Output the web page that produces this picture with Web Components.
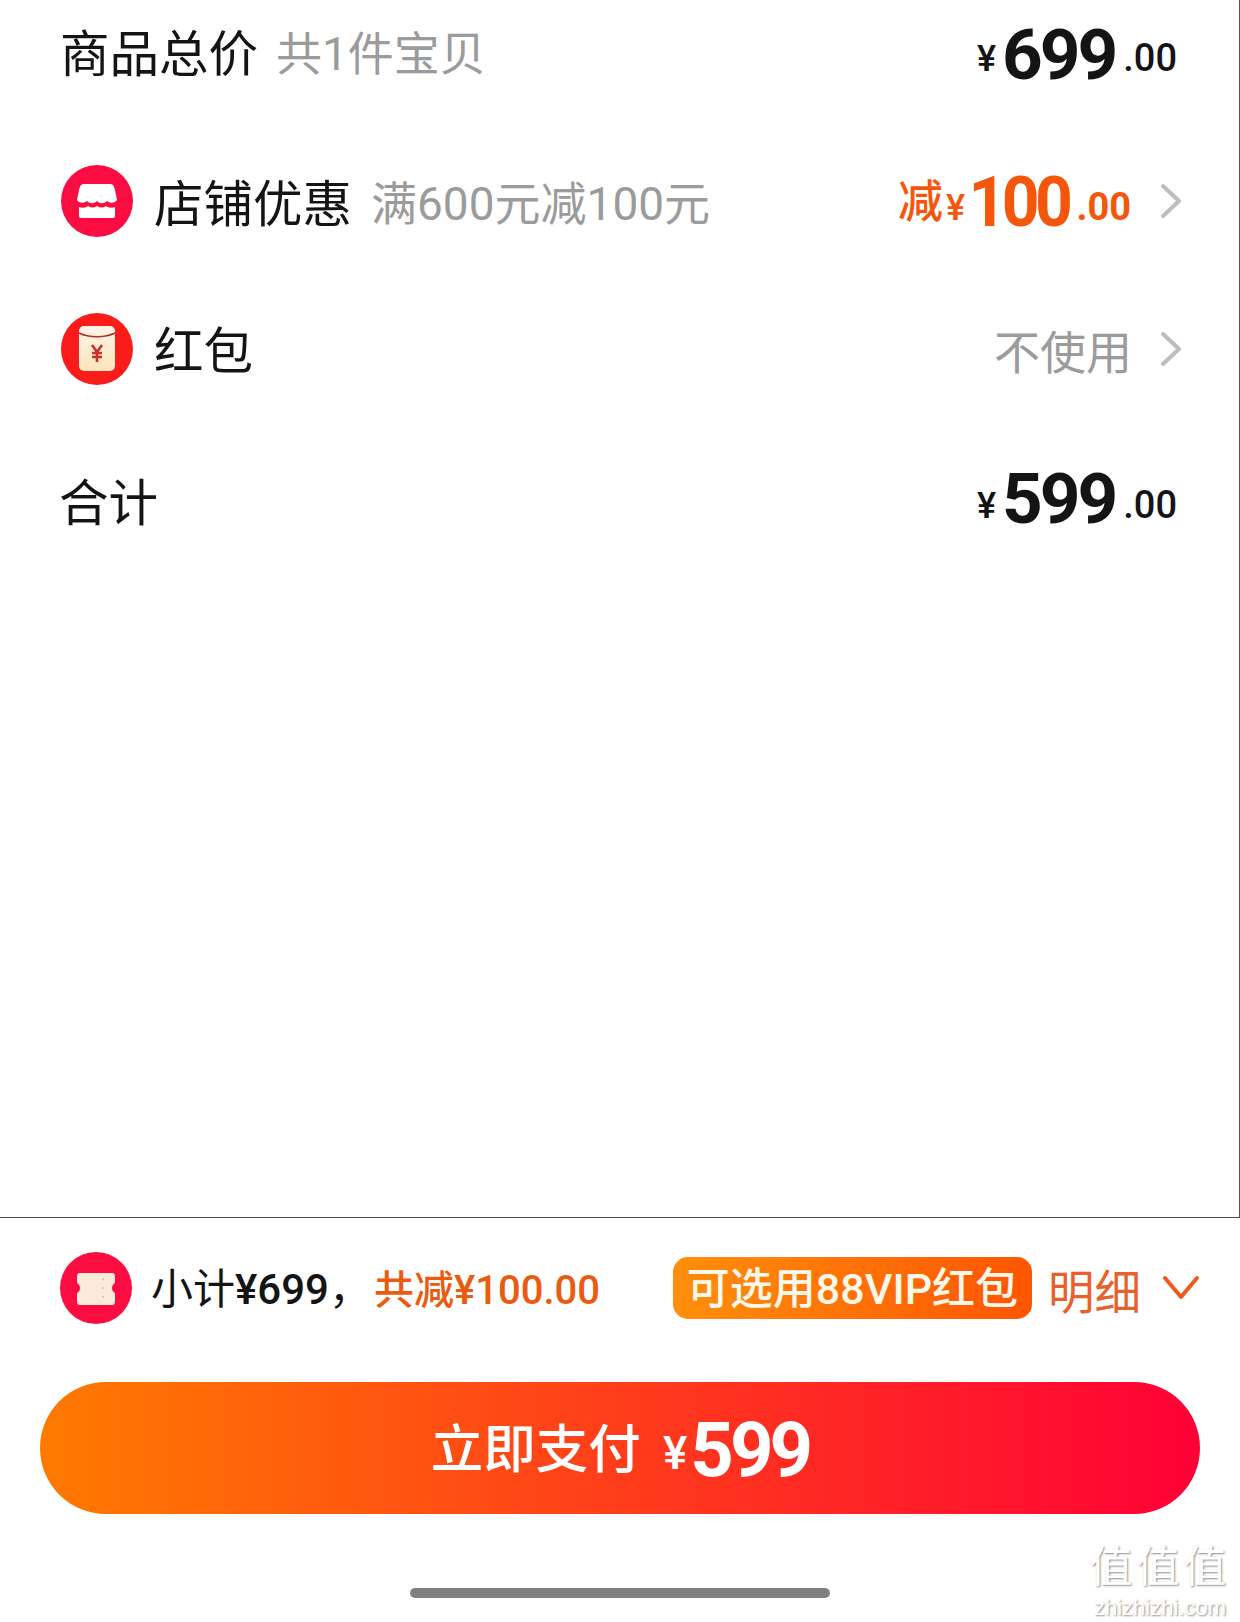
<!DOCTYPE html>
<html lang="zh">
<head>
<meta charset="utf-8">
<title>立即支付</title>
<style>
  html, body { margin: 0; padding: 0; background: #fff; }
  body { width: 1240px; height: 1622px; overflow: hidden; font-family: Roboto, "Noto Sans CJK SC", sans-serif; color: #111; }
</style>
</head>
<body>
<checkout-page>
  <order-row slot="rows" style="--label-lift: 8px; --label-shift: -1px; --note-gap: 18px">
    <span slot="label">商品总价</span>
    <span slot="note">共1件宝贝</span>
    <money-amount slot="value" yen="699"></money-amount>
  </order-row>
  <order-row slot="rows" chevron style="--row-top: 39px; --label-lift: 2px; --raise: 6px; --note-gap: 19px">
    <round-icon slot="icon" kind="shop"></round-icon>
    <span slot="label">店铺优惠</span>
    <span slot="note">满600元减100元</span>
    <money-amount slot="value" yen="100" prefix="减" tone="orange"></money-amount>
  </order-row>
  <order-row slot="rows" chevron style="--row-top: 40px">
    <round-icon slot="icon" kind="packet"></round-icon>
    <span slot="label">红包</span>
    <span slot="value" style="font-size:46px;color:#9b9b9b;margin-right:-1px">不使用</span>
  </order-row>
  <order-row slot="rows" style="--row-top: 41px; --label-lift: -2px; --label-shift: -2px; --raise: 5px">
    <span slot="label">合计</span>
    <money-amount slot="value" yen="599"></money-amount>
  </order-row>

  <summary-bar slot="footer"></summary-bar>
  <pay-button slot="footer" yen="599"></pay-button>
  <home-bar slot="footer"></home-bar>
</checkout-page>
<site-mark></site-mark>

<script>
class CheckoutPage extends HTMLElement {
  constructor() {
    super();
    this.attachShadow({ mode: 'open' });
    this.shadowRoot.innerHTML = `
      <style>
        :host { display: flex; flex-direction: column; width: 1240px; height: 1622px; }
        .rows { display: flex; flex-direction: column; height: 1217px; box-sizing: border-box; border-right: 1px solid #555; }
        .footer { flex: 1; display: flex; flex-direction: column; border-top: 1px solid #4a4a4a; }
      </style>
      <section class="rows"><slot name="rows"></slot></section>
      <section class="footer"><slot name="footer"></slot></section>
    `;
  }
}

class OrderRow extends HTMLElement {
  constructor() {
    super();
    this.attachShadow({ mode: 'open' });
    const chevron = this.hasAttribute('chevron');
    this.shadowRoot.innerHTML = `
      <style>
        :host { display: flex; align-items: center; flex: none; height: 108px; margin-top: var(--row-top, 0); padding: 0 58px 0 61px; font-family: Roboto, "Noto Sans CJK SC", sans-serif; }
        .icon { display: flex; }
        .icon slot::slotted(*) { margin-right: 21px; }
        .label { font-size: 49.5px; color: #141414; margin-left: var(--label-shift, 0); margin-bottom: var(--label-lift, 4px); }
        .note { font-size: 46px; color: #9b9b9b; margin-left: var(--note-gap, 17px); margin-bottom: var(--label-lift, 4px); }
        .value { margin-left: auto; display: flex; align-items: center; margin-right: ${chevron ? 0 : 4}px; }
        svg { width: 22px; height: 36px; margin-left: 29px; margin-right: -1px; }
      </style>
      <div class="icon"><slot name="icon"></slot></div>
      <div class="label"><slot name="label"></slot></div>
      <div class="note"><slot name="note"></slot></div>
      <div class="value">
        <slot name="value"></slot>
        ${chevron ? '<svg viewBox="0 0 22 36"><path d="M3 3l16 15L3 33" fill="none" stroke="#bdbdbd" stroke-width="4" stroke-linecap="round" stroke-linejoin="round"/></svg>' : ''}
      </div>
    `;
  }
}

class MoneyAmount extends HTMLElement {
  constructor() {
    super();
    this.attachShadow({ mode: 'open' });
    const prefix = this.getAttribute('prefix');
    this.shadowRoot.innerHTML = `
      <style>
        :host { display: inline-block; white-space: nowrap; color: #141414; font-family: Roboto, "Noto Sans CJK SC", sans-serif; font-weight: 700; line-height: 1; }
        :host([tone="orange"]) { color: #f4570b; --big-track: -5px; --sign-gap: 3px; --big-scale: .93; --big-pull: -7px; --cents-weight: 700; }
        .prefix { font-size: 45px; font-weight: 500; margin-right: 3px; vertical-align: 8px; }
        .sign { font-size: 36px; font-weight: 500; margin-right: var(--sign-gap, 6px); vertical-align: var(--raise, 8px); }
        .big { display: inline-block; font-size: 71px; letter-spacing: var(--big-track, -3px); transform: scaleX(var(--big-scale, 1)); transform-origin: right; margin-left: var(--big-pull, 0); }
        .cents { font-size: 38px; font-weight: var(--cents-weight, 500); margin-left: 8px; vertical-align: var(--raise, 8px); }
      </style>
      ${prefix ? `<span class="prefix">${prefix}</span>` : ''}<span class="sign">¥</span><span class="big">${this.getAttribute('yen')}</span><span class="cents">.00</span>
    `;
  }
}

class RoundIcon extends HTMLElement {
  constructor() {
    super();
    this.attachShadow({ mode: 'open' });
    const glyphs = {
      shop: `<circle cx="36" cy="36" r="36" fill="#fb0d41"/>
        <path d="M23 19h26c3 0 4 2 5 6l2 10c-2 3-6 4-10 1-3 3-7 3-10 0-3 3-7 3-10 0-4 3-8 2-10-1l2-10c1-4 2-6 5-6z" fill="#fff"/>
        <path d="M18 42c3 1 7 1 9-1 3 2 6 2 9 0 3 2 6 2 9 0 2 2 6 2 9 1v9a2 2 0 0 1-2 2H20a2 2 0 0 1-2-2z" fill="#fff"/>`,
      packet: `<defs><linearGradient id="p" x1="0" y1="0" x2="0" y2="1"><stop offset="0" stop-color="#fff4ea"/><stop offset="1" stop-color="#fde5ba"/></linearGradient></defs>
        <circle cx="36" cy="36" r="36" fill="#fa1b1b"/>
        <rect x="18" y="13" width="36" height="45" rx="5" fill="url(#p)"/>
        <path d="M18 20c10 5 26 5 36 0" fill="none" stroke="#a8332a" stroke-width="1.6"/>
        <path d="M31 32l5 7 5-7M36 39v10M31 40h10M31 44h10" fill="none" stroke="#c8322a" stroke-width="2.6"/>`,
      ticket: `<circle cx="36" cy="36" r="36" fill="#fb0d41"/>
        <path d="M20 21h32a3 3 0 0 1 3 3v7c-4 2-4 8 0 10v9a3 3 0 0 1-3 3H20a3 3 0 0 1-3-3v-9c4-2 4-8 0-10v-7a3 3 0 0 1 3-3z" fill="#fbe9dc"/>
        <path d="M43 26v2M43 35v2M43 44v2" stroke="#e8c9b4" stroke-width="2"/>`
    };
    this.shadowRoot.innerHTML = `
      <style>
        :host { display: block; width: 72px; height: 72px; flex: none; }
        svg { display: block; width: 72px; height: 72px; }
      </style>
      <svg viewBox="0 0 72 72">${glyphs[this.getAttribute('kind')]}</svg>
    `;
  }
}

class SummaryBar extends HTMLElement {
  constructor() {
    super();
    this.attachShadow({ mode: 'open' });
    this.shadowRoot.innerHTML = `
      <style>
        :host { display: flex; align-items: center; height: 142px; padding: 0 40px 2px 60px; box-sizing: border-box; font-family: Roboto, "Noto Sans CJK SC", sans-serif; }
        .sub { font-size: 42px; font-weight: 500; color: #141414; margin-left: 19px; margin-bottom: 6px; white-space: nowrap; }
        .sub b { font-weight: 400; }
        .off { font-size: 40px; font-weight: 500; color: #ea5b10; white-space: nowrap; margin-left: 3px; margin-bottom: 2px; }
        .badge { margin-left: auto; height: 62px; width: 359px; box-sizing: border-box; padding-bottom: 6px; display: flex; align-items: center; justify-content: center; border-radius: 15px; background: linear-gradient(90deg, #ff8f0c, #ff5500); color: #fff8ea; font-size: 43px; font-weight: 500; white-space: nowrap; }
        .detail { font-size: 46.5px; color: #e8602a; margin-left: 16px; white-space: nowrap; }
        svg { width: 38px; height: 26px; margin-left: 21px; margin-bottom: 2px; }
      </style>
      <round-icon kind="ticket"></round-icon>
      <span class="sub"><b>小计</b>¥699<b>，</b></span>
      <span class="off">共减¥100.00</span>
      <span class="badge">可选用88VIP红包</span>
      <span class="detail">明细</span>
      <svg viewBox="0 0 38 26"><path d="M3 4l16 19L35 4" fill="none" stroke="#f05a1e" stroke-width="4" stroke-linecap="round" stroke-linejoin="round"/></svg>
    `;
  }
}

class PayButton extends HTMLElement {
  constructor() {
    super();
    this.attachShadow({ mode: 'open' });
    this.shadowRoot.innerHTML = `
      <style>
        :host { display: flex; align-items: center; justify-content: center; height: 132px; margin: 22px 40px 0; border-radius: 66px; background: linear-gradient(90deg, #ff7a00, #ff0036); color: #fff; font-family: Roboto, "Noto Sans CJK SC", sans-serif; }
        .wrap { white-space: nowrap; line-height: 1; padding-top: 4px; }
        .label { font-size: 52.5px; font-weight: 500; vertical-align: 8px; }
        .sign { font-size: 46px; font-weight: 500; margin-left: 22px; margin-right: 3px; vertical-align: 7px; }
        .big { font-size: 76px; font-weight: 700; letter-spacing: -4px; }
      </style>
      <div class="wrap"><span class="label">立即支付</span><span class="sign">¥</span><span class="big">${this.getAttribute('yen')}</span></div>
    `;
  }
}

class HomeBar extends HTMLElement {
  constructor() {
    super();
    this.attachShadow({ mode: 'open' });
    this.shadowRoot.innerHTML = `
      <style>
        :host { display: block; width: 420px; height: 10px; margin: 74px 0 0 410px; border-radius: 5px; background: #808080; }
      </style>
    `;
  }
}

class SiteMark extends HTMLElement {
  constructor() {
    super();
    this.attachShadow({ mode: 'open' });
    this.shadowRoot.innerHTML = `
      <style>
        :host { position: absolute; left: 1086px; top: 1542px; width: 148px; display: flex; flex-direction: column; align-items: center; color: #fff; font-family: "Noto Sans CJK SC", sans-serif; text-shadow: 1px 1px 2px rgba(0,0,0,.45); line-height: 1; }
        .cn { font-size: 43px; letter-spacing: 4px; }
        .en { font-family: "Liberation Sans", sans-serif; font-size: 22px; margin-top: 12px; }
      </style>
      <span class="cn">值值值</span>
      <span class="en">zhizhizhi.com</span>
    `;
  }
}

customElements.define('checkout-page', CheckoutPage);
customElements.define('order-row', OrderRow);
customElements.define('money-amount', MoneyAmount);
customElements.define('round-icon', RoundIcon);
customElements.define('summary-bar', SummaryBar);
customElements.define('pay-button', PayButton);
customElements.define('home-bar', HomeBar);
customElements.define('site-mark', SiteMark);
</script>
</body>
</html>
